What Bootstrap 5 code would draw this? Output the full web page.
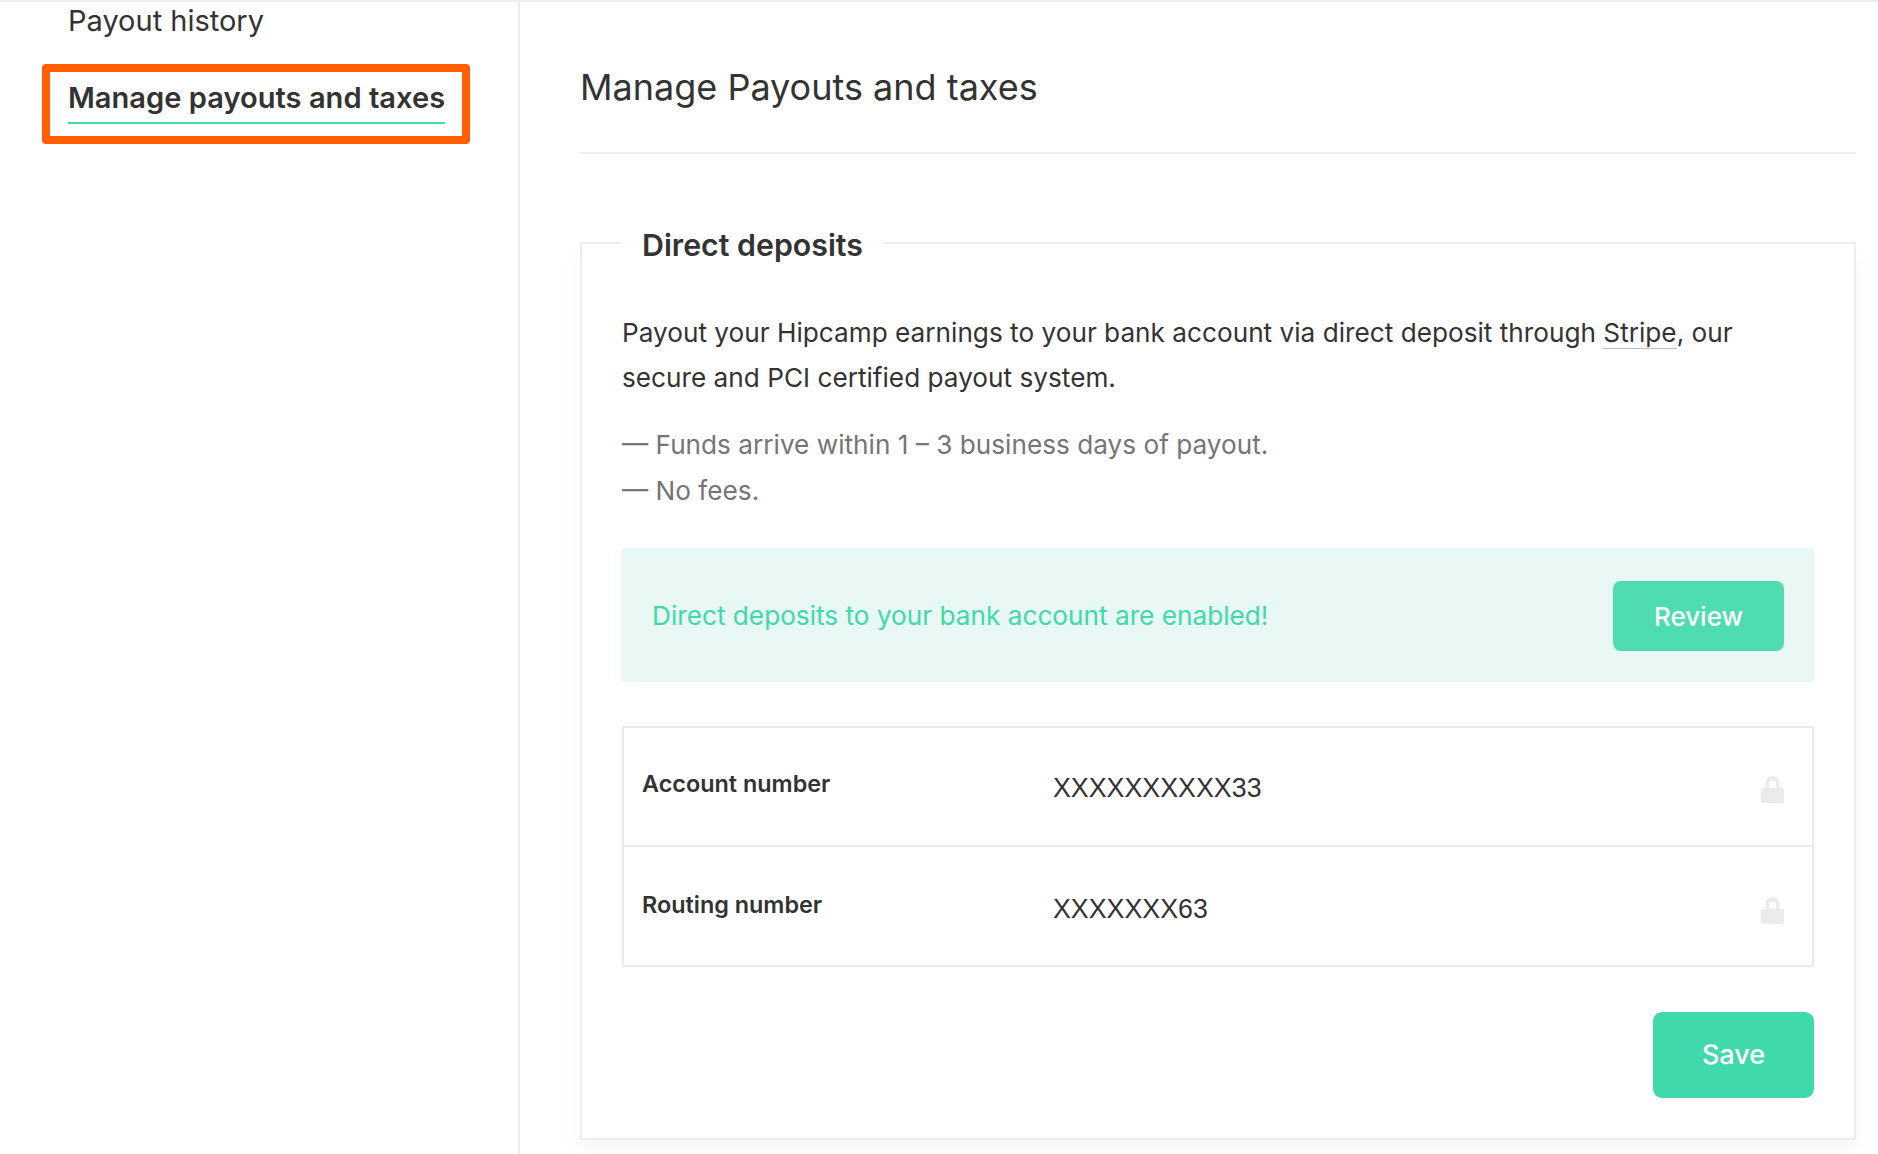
<!DOCTYPE html>
<html lang="en">
<head>
<meta charset="utf-8">
<title>Manage Payouts and taxes</title>
<link href="https://cdn.jsdelivr.net/npm/bootstrap@5.3.0/dist/css/bootstrap.min.css" rel="stylesheet">
<style>
html,body{height:100%;}
body{font-family:"Inter","Liberation Sans",sans-serif;color:#333;background:#fff;overflow:hidden;font-size:26.2px;}
.page-shell{height:1154px;border-top:2px solid #eee;}
.side-col{width:520px;flex:none;border-right:2px solid #eee;padding-left:42px;font-size:29px;}
.side-link{display:block;color:#333;text-decoration:none;}
.side-plain{padding-left:26px;line-height:40px;margin-top:-1px;margin-bottom:23px;}
.side-hot{align-self:flex-start;width:428px;height:80px;border:8px solid #ff5f00;border-radius:4px;padding:4px 0 0 18px;font-weight:600;font-size:29.1px;}
.side-hot span{display:inline-block;border-bottom:2px solid #40d9ac;line-height:38px;padding-bottom:5px;white-space:nowrap;}
.main-col{padding:0 22px 0 60px;}
.page-title{font-size:36px;font-weight:400;line-height:44px;margin:63px 0 0;padding-bottom:43px;border-bottom:2px solid #eee;}
.dep-box{border:2px solid #eee;margin-top:63px;height:923px;padding:0 40px;box-shadow:0 12px 22px rgba(0,0,0,.04);}
.dep-box legend{float:none;width:auto;padding:4px 20px 0;margin:0;font-size:30.300px;font-weight:600;line-height:48px;}
.intro{line-height:45px;margin:41px 0 0;}
.intro-link{color:#333;text-decoration:none;border-bottom:1px solid #bbb;}
.notes{color:#757575;line-height:46px;margin:22px 0 0;}
.enabled-bar{background:#e9f8f4;border-radius:4px;height:134px;margin-top:34px;padding:2px 30px 0;color:#40d9ac;}
.green-btn{color:#fff;border:0;font-weight:500;background:#40d9ac;}
.green-btn:hover{color:#fff;background:#40d9ac;}
.review-btn{width:171px;height:70px;border-radius:8px;background:#4fdcb0;font-size:26px;}
.save-btn{width:161px;height:86px;border-radius:9px;font-size:27px;}
.acct-table{border:2px solid #ebebeb;margin-top:44px;}
.acct-row{height:117px;padding:0 28px 0 18px;}
.acct-row+.acct-row{border-top:2px solid #ebebeb;height:120px;padding-top:2px;}
.acct-label{width:411px;font-size:23.400px;font-weight:600;margin-top:-5px;}
.acct-val{font-family:"Liberation Sans",Arial,sans-serif;font-size:26.8px;flex:1;margin-top:4px;}
.lock-ico{width:23px;height:27px;fill:#ebebeb;margin-top:6px;}
.save-wrap{margin-top:45px;}
</style>
</head>
<body>
<div class="page-shell d-flex">
  <aside class="side-col d-flex flex-column">
    <a class="side-link side-plain" href="#">Payout history</a>
    <a class="side-link side-hot" href="#"><span>Manage payouts and taxes</span></a>
  </aside>
  <main class="main-col flex-grow-1">
    <h1 class="page-title">Manage Payouts and taxes</h1>
    <fieldset class="dep-box">
      <legend>Direct deposits</legend>
      <p class="intro">Payout your Hipcamp earnings to your bank account via direct deposit through <a class="intro-link" href="#">Stripe</a>, our secure and PCI certified payout system.</p>
      <div class="notes">
        <div>— Funds arrive within 1 – 3 business days of payout.</div>
        <div>— No fees.</div>
      </div>
      <div class="enabled-bar d-flex align-items-center justify-content-between">
        <span>Direct deposits to your bank account are enabled!</span>
        <button type="button" class="btn green-btn review-btn">Review</button>
      </div>
      <div class="acct-table">
        <div class="acct-row d-flex align-items-center">
          <div class="acct-label">Account number</div>
          <div class="acct-val">XXXXXXXXXX33</div>
          <svg class="lock-ico" viewBox="0 0 23 27" aria-hidden="true"><path fill-rule="evenodd" d="M11.5 0C7.6 0 4.5 2.800 4.5 7V12H2a2 2 0 0 0-2 2V25a2 2 0 0 0 2 2h19a2 2 0 0 0 2-2V14a2 2 0 0 0-2-2h-2.500V7c0-4.200-3.100-7-7-7zm0 4.500c2.100 0 3.500 1.200 3.500 3.200V12H8V7.700c0-2 1.400-3.200 3.500-3.200z"/></svg>
        </div>
        <div class="acct-row d-flex align-items-center">
          <div class="acct-label">Routing number</div>
          <div class="acct-val">XXXXXXX63</div>
          <svg class="lock-ico" viewBox="0 0 23 27" aria-hidden="true"><path fill-rule="evenodd" d="M11.5 0C7.6 0 4.5 2.800 4.5 7V12H2a2 2 0 0 0-2 2V25a2 2 0 0 0 2 2h19a2 2 0 0 0 2-2V14a2 2 0 0 0-2-2h-2.500V7c0-4.200-3.100-7-7-7zm0 4.500c2.100 0 3.500 1.200 3.500 3.200V12H8V7.700c0-2 1.400-3.200 3.500-3.200z"/></svg>
        </div>
      </div>
      <div class="save-wrap d-flex justify-content-end">
        <button type="button" class="btn green-btn save-btn">Save</button>
      </div>
    </fieldset>
  </main>
</div>
<script src="https://cdn.jsdelivr.net/npm/bootstrap@5.3.0/dist/js/bootstrap.bundle.min.js"></script>
</body>
</html>
